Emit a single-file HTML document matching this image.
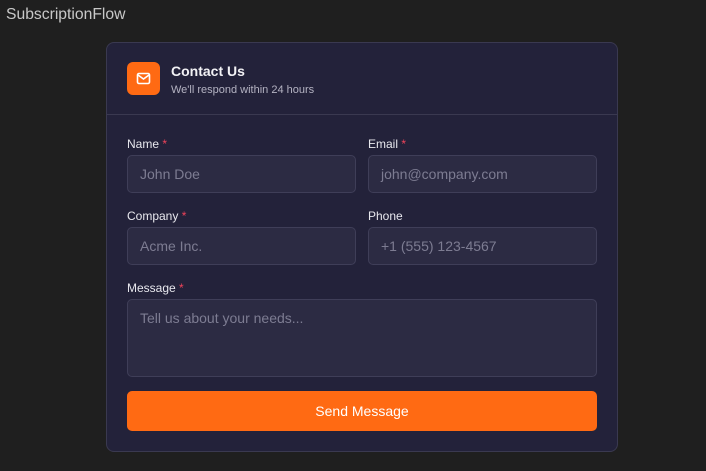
<!DOCTYPE html>
<html><head><style>
*{box-sizing:border-box;margin:0;padding:0}
body{width:706px;height:471px;background:#1f1f1f;font-family:"Liberation Sans",sans-serif;position:relative;overflow:hidden}
.brand{position:absolute;left:6px;top:6px;font-size:15.7px;color:#c8c8c8}
.card{position:absolute;left:106px;top:42px;width:512px;height:410px;background:#23223a;border:1px solid #3a3950;border-radius:8px}
.hdr{height:72px;border-bottom:1px solid #3a3950;position:relative}
.ic{position:absolute;left:20px;top:19px;width:33px;height:33px;background:#ff6a13;border-radius:6px}
.t{position:absolute;left:64px;top:20px;color:#f2f2f5;font-size:14px;font-weight:bold}
.s{position:absolute;left:64px;top:41px;color:#b4b3c2;font-size:11px}
.lbl{position:absolute;color:#e8e8ee;font-size:12px}
.lbl b{color:#f0435a;font-weight:normal}
.in{position:absolute;background:#2c2b43;border:1px solid #3f3e58;border-radius:5px;color:#7d7c92;font-size:14px;padding:10px 12px}
.btn{position:absolute;left:20px;top:348px;width:470px;height:40px;background:#ff6a13;border-radius:5px;color:#fff;font-size:14px;text-align:center;line-height:40px}
</style></head><body>
<div class="brand">SubscriptionFlow</div>
<div class="card">
<div class="hdr"><div class="ic"><svg width="33" height="33" viewBox="0 0 33 33"><rect x="10.5" y="11.5" width="12" height="10" rx="1.5" fill="none" stroke="#fff" stroke-width="1.6"/><path d="M11 13l5.5 4 5.5-4" fill="none" stroke="#fff" stroke-width="1.6"/></svg></div>
<div class="t">Contact Us</div><div class="s">We'll respond within 24 hours</div></div>
<div class="lbl" style="left:20px;top:94px">Name <b>*</b></div>
<div class="lbl" style="left:261px;top:94px">Email <b>*</b></div>
<div class="in" style="left:20px;top:112px;width:229px;height:38px">John Doe</div>
<div class="in" style="left:261px;top:112px;width:229px;height:38px">john@company.com</div>
<div class="lbl" style="left:20px;top:166px">Company <b>*</b></div>
<div class="lbl" style="left:261px;top:166px">Phone</div>
<div class="in" style="left:20px;top:184px;width:229px;height:38px">Acme Inc.</div>
<div class="in" style="left:261px;top:184px;width:229px;height:38px">+1 (555) 123-4567</div>
<div class="lbl" style="left:20px;top:238px">Message <b>*</b></div>
<div class="in" style="left:20px;top:256px;width:470px;height:78px">Tell us about your needs...</div>
<div class="btn">Send Message</div>
</div>
</body></html>
